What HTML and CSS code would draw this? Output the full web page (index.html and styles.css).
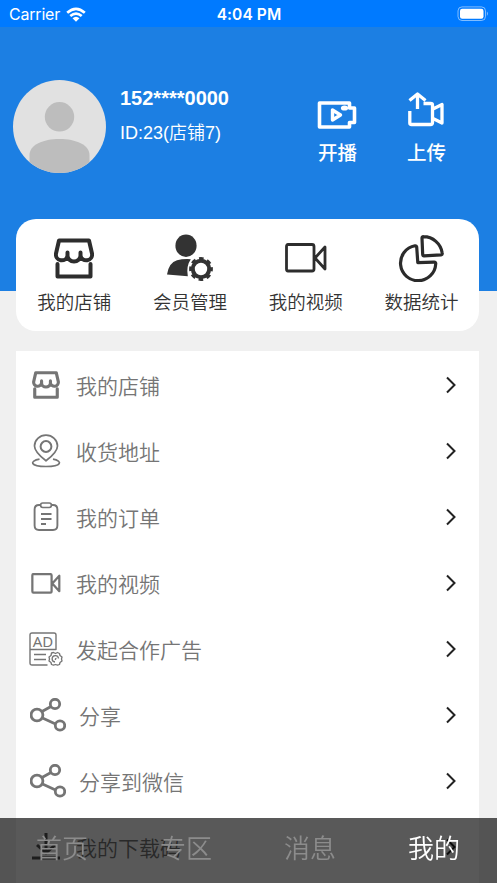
FILE: index.html
```html
<!DOCTYPE html>
<html lang="zh-CN">
<head>
<meta charset="utf-8">
<title>我的</title>
<link rel="stylesheet" href="styles.css">
</head>
<body>
<svg class="defs" aria-hidden="true">
  <symbol id="shop" viewBox="0 0 40 41">
    <path d="M5 2.500H35L38 15.500A5.700 5.700 0 0 1 26.500 17.500A6.500 6 0 0 1 13.500 17.500A5.700 5.700 0 0 1 2 15.500ZM13.500 18V14.500M26.500 18V14.500M3.500 26V38.500H36.500V26"/>
  </symbol>
  <symbol id="camera" viewBox="0 0 42 30">
    <path d="M3 1.500H27Q29 1.500 29 3.500V26Q29 28 27 28H3Q1.500 28 1.500 26V3.500Q1.500 1.500 3 1.500ZM30 15L40 4V26Z"/>
  </symbol>
  <symbol id="share" viewBox="0 0 36 34">
    <circle cx="7" cy="17" r="5.900"/><circle cx="25" cy="6" r="4.700"/><circle cx="30" cy="27.500" r="4.700"/><path d="M12 13.500L21 8.500M12.500 20L25.500 26"/>
  </symbol>
  <symbol id="chevron" viewBox="0 0 12 20"><path d="M2 2.500L9.500 10L2 17.500"/></symbol>
</svg>
<div class="screen">
  <header class="status">
    <div class="carrier"><span>Carrier</span>
      <svg width="20" height="16" viewBox="0 0 20 16"><path d="M1.200 5.800Q10-2 18.800 5.800M4.300 9Q10 4.200 15.700 9" fill="none" stroke="#fff" stroke-width="2.700"/><path d="M6.500 11.200Q10 8.200 13.500 11.200L10 14.800Z" fill="#fff"/></svg>
    </div>
    <div class="time">4:04 PM</div>
    <div class="battery">
      <svg width="32" height="16" viewBox="0 0 32 16"><rect x="1" y=".9" width="27.500" height="13.600" rx="4" fill="none" stroke="#fff" stroke-opacity=".5"/><rect x="3" y="2.800" width="23.500" height="9.900" rx="2.200" fill="#fff"/><path d="M29.900 5.500Q32 7.700 29.900 10Z" fill="#fff" opacity=".5"/></svg>
    </div>
  </header>
  <section class="profile">
    <svg class="avatar" viewBox="0 0 93 93"><clipPath id="round"><circle cx="46.500" cy="46.500" r="46.500"/></clipPath><g clip-path="url(#round)"><rect width="93" height="93" fill="#e1e1e1"/><circle cx="46.500" cy="36.800" r="14.700" fill="#bdbdbd"/><path d="M16.500 93V75C16.500 65 30 59 46.500 59S76.500 65 76.500 75V93Z" fill="#bdbdbd"/></g></svg>
    <div class="who"><div class="phone">152****0000</div><div class="uid">ID:23(店铺7)</div></div>
    <div class="action">
      <svg width="44" height="40" viewBox="0 0 44 40"><g fill="none" stroke="#fff" stroke-width="3.600"><path d="M3.500 12H33.500V17H38.500V31.500H33.500V36H3.500Z" stroke-linejoin="round"/><path d="M16.500 19V29L24.500 24Z" stroke-width="3.400" stroke-linejoin="round"/></g><ellipse cx="28.500" cy="17" rx="3.600" ry="2.600" fill="#fff"/></svg>
      <span>开播</span>
    </div>
    <div class="action">
      <svg width="44" height="40" viewBox="0 0 44 40"><path d="M4.800 20V32Q4.800 33.500 6.500 33.500H25.500Q27.500 33.500 27.500 31.500V14Q27.500 12.500 25.500 12.500H18.500M12.500 18V3M4.500 9.500L12.500 3L20.500 9.500M28 18L37 13.500V32L28 27.500" fill="none" stroke="#fff" stroke-width="3.300" stroke-linejoin="round"/></svg>
      <span>上传</span>
    </div>
  </section>
  <main>
    <nav class="card">
      <a><svg class="big shop"><use href="#shop"/></svg><span>我的店铺</span></a>
      <a><svg class="big member" viewBox="0 0 48 48"><g fill="#333"><ellipse cx="20" cy="11.700" rx="10.600" ry="11.200"/><path d="M11 26.300Q17 24.700 24.800 25.200Q20 32 21.800 42.200L1 40.500Q3 28.500 11 26.300Z"/></g><circle cx="35" cy="35" r="8.200" fill="none" stroke="#333" stroke-width="4"/><circle cx="35" cy="35" r="10.500" fill="none" stroke="#333" stroke-width="2.800" stroke-dasharray="4.600 3.647" stroke-dashoffset="2.300"/></svg><span>会员管理</span></a>
      <a><svg class="big camera"><use href="#camera"/></svg><span>我的视频</span></a>
      <a><svg class="big pie" viewBox="0 0 46 47"><g fill="none" stroke="#2b2b2b" stroke-width="3.200" stroke-linejoin="round"><path d="M18.700 12Q18.500 10.500 17 10.800A17.600 17.600 0 1 0 37.700 29Q38 27 36 27.100L19.800 27.700Z"/><path d="M24 3Q24 1.600 25.500 1.700A19 19 0 0 1 44.200 18Q44.500 19.600 43 19.800L26 20.900Q24.800 20.900 24.700 19.500Z"/></g></svg><span>数据统计</span></a>
    </nav>
    <div class="list">
      <a class="row"><i><svg class="s-shop"><use href="#shop"/></svg></i><span>我的店铺</span><svg class="chevron"><use href="#chevron"/></svg></a>
      <a class="row"><i><svg width="28" height="34" viewBox="0 0 28 34"><path d="M14 26.800Q2.500 18 2.500 12A11.500 10.900 0 0 1 25.500 12Q25.500 18 14 26.800Z"/><circle cx="14" cy="12.500" r="5.400" stroke-width="2"/><path d="M7.500 25.200C-3 27-2 32.500 14 32.500S31 27 21 25.200"/></svg></i><span>收货地址</span><svg class="chevron"><use href="#chevron"/></svg></a>
      <a class="row"><i><svg width="26" height="30" viewBox="0 0 26 30"><path d="M7.500 3H6Q1.600 3 1.600 7.500V23.500Q1.600 28 6 28H20Q24.400 28 24.400 23.500V7.500Q24.400 3 20 3H18.500M8 12H18.500M8 17H18.500M8 22H13" stroke-width="1.900"/><rect x="7.600" y="1" width="10.800" height="4.500" rx="2.200"/></svg></i><span>我的订单</span><svg class="chevron"><use href="#chevron"/></svg></a>
      <a class="row"><i><svg class="s-camera"><use href="#camera"/></svg></i><span>我的视频</span><svg class="chevron"><use href="#chevron"/></svg></a>
      <a class="row"><i><svg width="34" height="34" viewBox="0 0 34 34"><path d="M18.500 33H3Q1 33 1 31V3Q1 1 3 1H25Q27 1 27 3V17.500H1M5 22.500H17M5 27.500H17" stroke-width="1.400"/><path d="M22.500 21L24.500 20.500L26.500 21.500L28.500 20.500L30.500 21.500L31 23.500L33 25L32.500 27L33 29L31 30.500L30.500 32.500L28.500 33.200L26.500 32.500L24.500 33.200L22.500 32.500L22 30.500L20 29L20.500 27L20 25L22 23.500Z" stroke-width="1.300"/><path d="M26 30A3.200 3.200 0 1 1 29.500 26.500M26.500 28A1 1 0 0 1 27.500 26.500" stroke-width="1.300"/><text x="14" y="14.500" text-anchor="middle">AD</text></svg></i><span>发起合作广告</span><svg class="chevron"><use href="#chevron"/></svg></a>
      <a class="row wide"><i><svg class="s-share"><use href="#share"/></svg></i><span>分享</span><svg class="chevron"><use href="#chevron"/></svg></a>
      <a class="row wide"><i><svg class="s-share"><use href="#share"/></svg></i><span>分享到微信</span><svg class="chevron"><use href="#chevron"/></svg></a>
      <a class="row"><i><svg class="download" width="28" height="30" viewBox="0 0 28 30"><path d="M14 1V21M5 13L14 21L23 13M0 26H28"/></svg></i><span>我的下载码</span><svg class="chevron"><use href="#chevron"/></svg></a>
    </div>
  </main>
  <nav class="tabs"><a>首页</a><a>专区</a><a>消息</a><a class="active">我的</a></nav>
</div>
</body>
</html>
```
FILE: styles.css
```css
* { box-sizing: border-box; }
body { margin: 0; font-family: "Liberation Sans", "Noto Sans CJK SC", sans-serif; background: #f0f0f0; }
.defs { position: absolute; width: 0; height: 0; }
.screen { height: 883px; overflow: hidden; }
.status { height: 27px; background: #007aff; color: #fff; display: grid; grid-template-columns: 1fr auto 1fr; align-items: center; padding: 0 8px 0 9px; font: 16px/27px Inter, sans-serif; }
.carrier { display: flex; align-items: center; gap: 6px; letter-spacing: -.2px; padding-top: 1px; }
.time { font-weight: 600; font-size: 15.5px; letter-spacing: .1px; padding-top: 1px; }
.battery { display: flex; justify-content: flex-end; }
.profile { height: 264px; background: #1c7fe3; color: #fff; display: flex; align-items: flex-start; padding: 52.5px 26px 0 13px; }
.avatar { width: 93px; height: 93px; margin-right: 14px; }
.who { flex: 1; padding-top: 5.5px; }
.phone { font-size: 20px; line-height: 26px; font-weight: 700; }
.uid { font-size: 18px; line-height: 26px; margin-top: 9px; font-weight: 350; }
.action { width: 89px; padding-top: 11.5px; display: flex; flex-direction: column; align-items: center; font: 500 19.5px/28px "Noto Sans CJK SC", sans-serif; }
.action svg { margin-bottom: 7px; }
main { padding: 0 18px 0 16px; margin-top: -72px; }
.card { height: 112px; border-radius: 20px; background: #fff; display: grid; grid-template-columns: repeat(4, 1fr); }
.card a { display: grid; grid-template-rows: 48px 28px; padding: 15px 0 0 1px; align-content: start; place-items: center; row-gap: 7px; font-size: 18.5px; line-height: 28px; color: #333; font-weight: 350; }
.big { fill: none; stroke: #2d2d2d; }
.shop { width: 40px; height: 41px; stroke-width: 4; stroke-linejoin: round; stroke-linecap: round; }
.member { width: 48px; height: 48px; stroke: none; }
.camera { width: 42px; height: 30px; stroke-width: 2.8; stroke-linejoin: round; }
.pie { width: 46px; height: 47px; margin-right: 2px; }
.list { background: #fff; margin-top: 20px; padding: 1px 0 10px; }
.row { height: 66px; display: flex; align-items: center; padding: 0 22px 0 12px; color: #757575; font-size: 21px; font-weight: 350; }
.row i { width: 36px; display: flex; justify-content: center; margin-right: 12px; }
.row span { flex: 1; line-height: 30px; padding-top: 3px; }
.row.wide i { margin: 0 13px 0 2px; }
.row i svg { fill: none; stroke: #757575; stroke-width: 1.7; stroke-linejoin: round; overflow: visible; }
.row i .s-shop { width: 28px; height: 28px; stroke-width: 4.6; stroke-linecap: round; }
.row i .s-camera { width: 30px; height: 21px; stroke-width: 3.2; }
.row i .s-share { width: 36px; height: 34px; stroke-width: 2.8; }
.row i .download { stroke: #555; stroke-width: 3; }
.row text { font: 15px "Noto Sans", sans-serif; fill: #757575; stroke: none; }
.chevron { width: 12px; height: 20px; fill: none; stroke: #222; stroke-width: 2; }
.tabs { position: fixed; bottom: 0; left: 0; right: 0; height: 65.5px; background: rgba(0, 0, 0, .65); display: grid; grid-template-columns: repeat(4, 1fr); padding-right: 1px; text-align: center; font-size: 26px; line-height: 63px; font-weight: 350; color: #8c8c8c; }
.tabs .active { color: #fff; }
```
